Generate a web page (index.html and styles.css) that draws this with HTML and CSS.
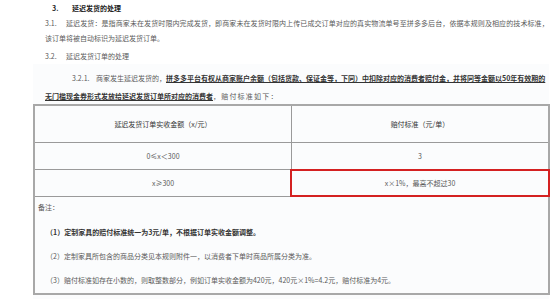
FILE: index.html
```html
<!DOCTYPE html>
<html lang="zh">
<head>
<meta charset="utf-8">
<link rel="stylesheet" href="styles.css">
</head>
<body>
<div class="top">
  <div class="heading"><span class="hnum">3.</span><span>延迟发货的处理</span></div>
  <div class="line"><span class="num">3.1.</span><span class="wide">延迟发货：是指商家未在发货时限内完成发货，即商家未在发货时限内上传已成交订单对应的真实物流单号至拼多多后台，依据本规则及相应的技术标准，</span></div>
  <div class="line">该订单将被自动标识为延迟发货订单。</div>
  <div class="line sec"><span class="num">3.2.</span>延迟发货订单的处理</div>
</div>
<div class="panel">
  <div class="line l321"><span class="num2">3.2.1.</span>商家发生延迟发货的，<b class="u">拼多多平台有权从商家账户余额（包括货款、保证金等，下同）中扣除对应的消费者赔付金，并将同等金额以50年有效期的</b></div>
  <div class="line l2"><b class="u">无门槛现金券形式发放给延迟发货订单所对应的消费者</b><span class="tail">，赔付标准如下：</span></div>
  <div class="table">
    <div class="row head">
      <div class="cell">延迟发货订单实收金额（x/元）</div>
      <div class="cell">赔付标准（元/单）</div>
    </div>
    <div class="row">
      <div class="cell">0≤x＜300</div>
      <div class="cell">3</div>
    </div>
    <div class="row">
      <div class="cell">x≥300</div>
      <div class="cell hl">x×1%，最高不超过30</div>
    </div>
    <div class="notes">
      <div class="note-title">备注：</div>
      <div class="note bold">（1）定制家具的赔付标准统一为3元/单，不根据订单实收金额调整。</div>
      <div class="note">（2）定制家具所包含的商品分类见本规则附件一，以消费者下单时商品所属分类为准。</div>
      <div class="note">（3）赔付标准如存在小数的，则取整数部分，例如订单实收金额为420元，420元×1%=4.2元，赔付标准为4元。</div>
    </div>
  </div>
</div>
</body>
</html>
```

FILE: styles.css
```css
html, body {
  margin: 0;
  padding: 0;
  background: #ffffff;
}
body {
  width: 557px;
  height: 299px;
  overflow: hidden;
  font-family: "Noto Sans CJK SC", "Noto Sans", sans-serif;
  font-size: 7px;
  color: #5a5a5a;
}
.top {
  padding-left: 45px;
}
.heading {
  height: 16px;
  line-height: 17px;
  padding-left: 7px;
  font-weight: bold;
  color: #222;
}
.hnum {
  display: inline-block;
  width: 20px;
}
.line {
  height: 15px;
  line-height: 15px;
  white-space: nowrap;
}
.wide {
  letter-spacing: 0.1px;
}
.tail {
  letter-spacing: 1.2px;
}
.num {
  display: inline-block;
  width: 21px;
}
.sec {
  margin-top: 3px;
}
.panel {
  margin-left: 33px;
  width: 516px;
  background: #fbfcfd;
  padding-top: 7px;
  height: 235px;
}
.l321 {
  padding-left: 39px;
}
.num2 {
  display: inline-block;
  width: 24px;
}
.l2 {
  margin-top: 3px;
  padding-left: 12px;
}
.u {
  text-decoration: underline;
  color: #333;
}
.table {
  border: 2px solid #a8a8a8;
  box-sizing: border-box;
  width: 517px;
  height: 191px;
}
.row {
  display: grid;
  grid-template-columns: 256px 1fr;
  height: 26px;
  border-bottom: 1px solid #9a9a9a;
}
.row.head {
  height: 36px;
  color: #333;
}
.cell {
  display: flex;
  align-items: center;
  justify-content: center;
}
.cell + .cell {
  border-left: 1px solid #9a9a9a;
}
.cell.hl {
  border: 2px solid #d42121;
  margin: -1px -2px -1px -1px;
}
.notes {
  padding: 3px 0 0 3px;
}
.note-title {
  height: 15px;
  line-height: 15px;
}
.note {
  margin-top: 9px;
  height: 15px;
  line-height: 15px;
  padding-left: 8px;
  white-space: nowrap;
}
.note.bold {
  margin-top: 10px;
  font-weight: bold;
  color: #333;
}
```
